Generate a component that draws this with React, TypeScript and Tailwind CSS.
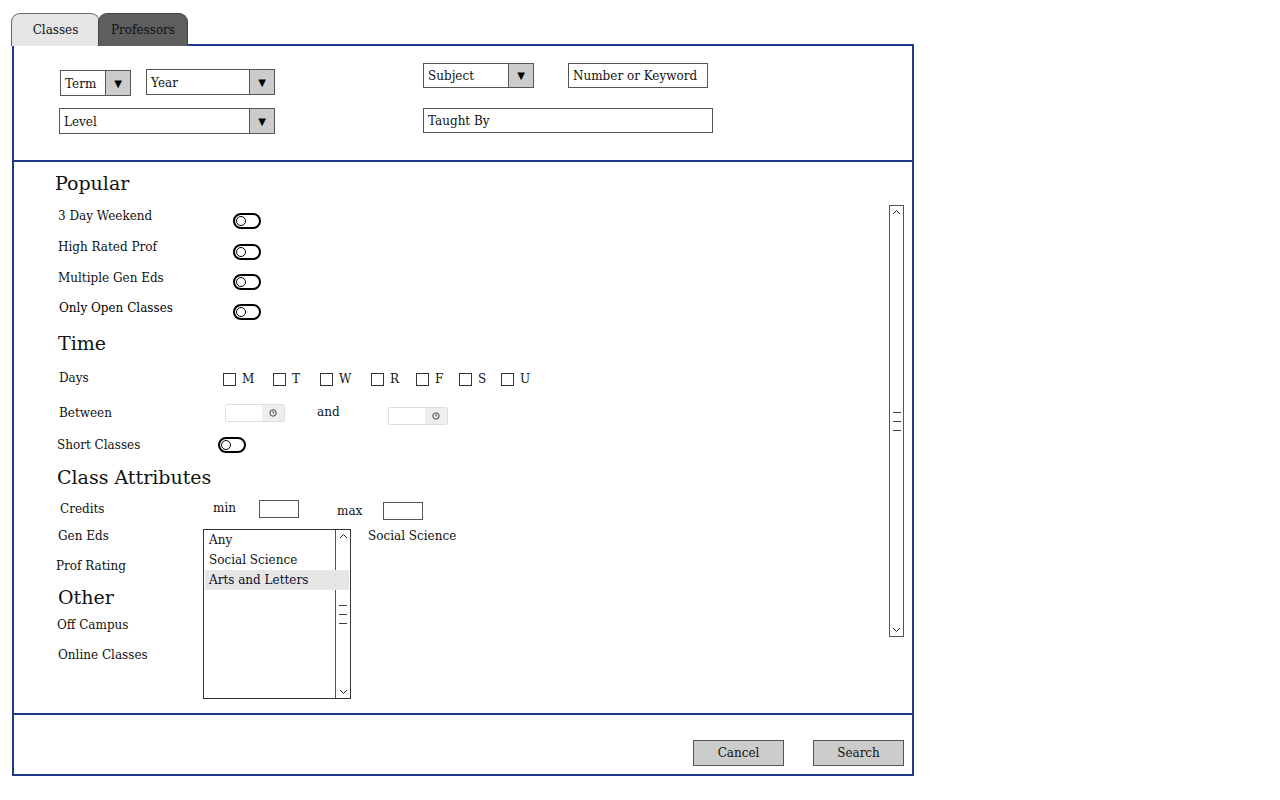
import React from 'react';

const serif = "font-['DejaVu_Serif',serif]";

const Toggle: React.FC<{ className?: string }> = ({ className = '' }) => (
  <div className={`w-[28px] h-[16px] rounded-full border-2 border-black flex items-center pl-[1px] ${className}`}>
    <div className="w-[10px] h-[10px] rounded-full border-[1.5px] border-black" />
  </div>
);

const Dropdown: React.FC<{ label: string; className: string }> = ({ label, className }) => (
  <div className={`flex border border-[#555] bg-white ${className}`}>
    <div className="flex-1 flex items-center pl-[4px] pt-[1px] text-[12px] text-[#111] whitespace-nowrap">{label}</div>
    <div className="w-[25px] bg-[#cccccc] border-l border-[#555] flex items-center justify-center text-[10px] text-black font-['DejaVu_Sans',sans-serif]">
      ▼
    </div>
  </div>
);

const TimeInput: React.FC<{ className?: string }> = ({ className = '' }) => (
  <div className={`w-[60px] h-[18px] flex border border-[#dddddd] rounded-[2px] ${className}`}>
    <div className="flex-1 bg-white" />
    <div className="w-[22px] bg-[#eeeeee] flex items-center justify-center">
      <svg width="8" height="8" viewBox="0 0 8 8">
        <circle cx="4" cy="4" r="3.2" fill="none" stroke="#444" strokeWidth="1" />
        <path d="M4 2.2V4h1.4" fill="none" stroke="#444" strokeWidth="0.9" />
      </svg>
    </div>
  </div>
);

const Scroll: React.FC<{ className: string }> = ({ className }) => (
  <div className={`flex flex-col items-center justify-between border border-[#555] bg-white ${className}`}>
    <svg width="9" height="6" viewBox="0 0 9 6" className="mt-[3px]">
      <path d="M1 5L4.5 1.5L8 5" fill="none" stroke="#222" strokeWidth="1" />
    </svg>
    <div className="flex flex-col gap-[8px]">
      <div className="w-[8px] h-[1px] bg-[#444]" />
      <div className="w-[8px] h-[1px] bg-[#444]" />
      <div className="w-[8px] h-[1px] bg-[#444]" />
    </div>
    <svg width="9" height="6" viewBox="0 0 9 6" className="mb-[3px]">
      <path d="M1 1L4.5 4.5L8 1" fill="none" stroke="#222" strokeWidth="1" />
    </svg>
  </div>
);

const days = [
  { d: 'M', w: 'w-[50px]' },
  { d: 'T', w: 'w-[47px]' },
  { d: 'W', w: 'w-[51px]' },
  { d: 'R', w: 'w-[45px]' },
  { d: 'F', w: 'w-[43px]' },
  { d: 'S', w: 'w-[42px]' },
  { d: 'U', w: 'w-[40px]' },
];

const popular = [
  { label: '3 Day Weekend', row: 'h-[31px]', t: 'mt-[5px]', l: 'ml-[1px] w-[175px]' },
  { label: 'High Rated Prof', row: 'h-[31px]', t: 'mt-[5px]', l: 'ml-[1px] w-[175px]' },
  { label: 'Multiple Gen Eds', row: 'h-[30px]', t: 'mt-[4px]', l: 'ml-[1px] w-[175px]' },
  { label: 'Only Open Classes', row: 'h-[31px]', t: 'mt-[4px]', l: 'ml-[2px] w-[174px] text-black' },
];

export default function App() {
  return (
    <div className={`w-[1280px] h-[800px] bg-white pt-[13px] ${serif} text-[#111]`}>
      {/* tabs */}
      <div className="flex ml-[11px] relative z-10">
        <div className="w-[89px] h-[33px] rounded-t-[9px] border border-b-0 border-[#666] bg-[#e6e6e6] flex items-center justify-center text-[12px]">
          Classes
        </div>
        <div className="w-[90px] h-[33px] -ml-[2px] rounded-t-[9px] border border-b-0 border-[#444] bg-[#5e5e5e] flex items-center justify-center text-[12px] text-[#111]">
          Professors
        </div>
      </div>

      <div className="ml-[12px] -mt-[2px] w-[902px] h-[732px] border-2 border-[#1e3a8a] flex flex-col">
        {/* search fields */}
        <div className="h-[116px] border-b-2 border-[#1e3a8a] flex pl-[45px] shrink-0">
          <div className="w-[216px] pt-[23px] flex flex-col gap-[12px]">
            <div className="flex items-start">
              <Dropdown label="Term" className="w-[71px] h-[26px] mt-[1px] ml-[1px]" />
              <Dropdown label="Year" className="w-[129px] h-[26px] ml-[15px]" />
            </div>
            <Dropdown label="Level" className="w-[216px] h-[26px]" />
          </div>
          <div className="ml-[148px] pt-[17px] flex flex-col gap-[20px]">
            <div className="flex">
              <Dropdown label="Subject" className="w-[111px] h-[25px]" />
              <div className="ml-[34px] w-[140px] h-[25px] border border-[#555] flex items-center pl-[4px] text-[12px] whitespace-nowrap">
                Number or Keyword
              </div>
            </div>
            <div className="w-[290px] h-[25px] border border-[#555] flex items-center pl-[4px] text-[12px]">
              Taught By
            </div>
          </div>
        </div>

        {/* filters */}
        <div className="flex-1 border-b-2 border-[#1e3a8a] flex">
          <div className="flex-1 pl-[43px] pt-[10px] text-[12px] leading-[16px]">
            <div className="text-[19px] leading-[22px] -ml-[2px]">Popular</div>
            <div className="mt-[14px]">
              {popular.map((p) => (
                <div key={p.label} className={`flex items-start ${p.row}`}>
                  <div className={p.l}>{p.label}</div>
                  <Toggle className={p.t} />
                </div>
              ))}
            </div>

            <div className="text-[19px] leading-[22px] mt-[1px] ml-[1px]">Time</div>
            <div className="mt-[16px] h-[35px] flex items-start">
              <div className="w-[166px] pl-[2px]">Days</div>
              {days.map((x) => (
                <div key={x.d} className={`flex items-start ${x.w}`}>
                  <div className="w-[13px] h-[13px] border border-[#333] mt-[3px]" />
                  <span className="ml-[6px] mt-[1px] leading-[16px]">{x.d}</span>
                </div>
              ))}
            </div>
            <div className="h-[32px] flex items-start">
              <div className="w-[168px] pl-[2px]">Between</div>
              <TimeInput className="-mt-[1px]" />
              <div className="ml-[32px] w-[71px] -mt-[1px]">and</div>
              <TimeInput className="mt-[2px]" />
            </div>
            <div className="h-[29px] flex items-start">
              <div className="w-[161px]">Short Classes</div>
              <Toggle />
            </div>

            <div className="text-[19px] leading-[22px]">Class Attributes</div>
            <div className="mt-[13px] h-[27px] flex items-start">
              <div className="w-[156px] pl-[3px]">Credits</div>
              <div className="w-[46px] -mt-[1px]">min</div>
              <div className="w-[40px] h-[18px] border border-[#555] -mt-[1px]" />
              <div className="ml-[38px] w-[46px] mt-[2px]">max</div>
              <div className="w-[40px] h-[18px] border border-[#555] mt-[1px]" />
            </div>
            <div className="flex items-start">
              <div className="w-[146px] flex flex-col">
                <div className="ml-[1px] h-[30px]">Gen Eds</div>
                <div className="-ml-[1px] h-[28px]">Prof Rating</div>
                <div className="ml-[1px] text-[19px] leading-[22px] h-[31px]">Other</div>
                <div className="h-[30px]">Off Campus</div>
                <div className="ml-[1px]">Online Classes</div>
              </div>
              <div className="relative w-[148px] h-[170px] mt-[1px] border border-[#333] bg-white">
                <div className="pl-[1px] pr-[1px] relative z-10">
                  <div className="h-[20px] pl-[4px] leading-[20px]">Any</div>
                  <div className="h-[20px] pl-[4px] leading-[20px]">Social Science</div>
                  <div className="h-[20px] pl-[4px] leading-[20px] bg-[#e6e6e6] text-[#0a0a2a]">Arts and Letters</div>
                </div>
                <Scroll className="absolute right-0 top-0 w-[15px] h-full border-y-0 border-r-0" />
              </div>
              <div className="ml-[17px]">Social Science</div>
            </div>
          </div>
          <Scroll className="w-[15px] h-[432px] mt-[43px] mr-[8px]" />
        </div>

        {/* actions */}
        <div className="h-[59px] flex justify-end items-end gap-[29px] pr-[8px] pb-[8px] shrink-0">
          <button className="w-[91px] h-[26px] border border-[#555] bg-[#cccccc] text-[12px] text-[#111]">Cancel</button>
          <button className="w-[91px] h-[26px] border border-[#555] bg-[#cccccc] text-[12px] text-[#111]">Search</button>
        </div>
      </div>
    </div>
  );
}
